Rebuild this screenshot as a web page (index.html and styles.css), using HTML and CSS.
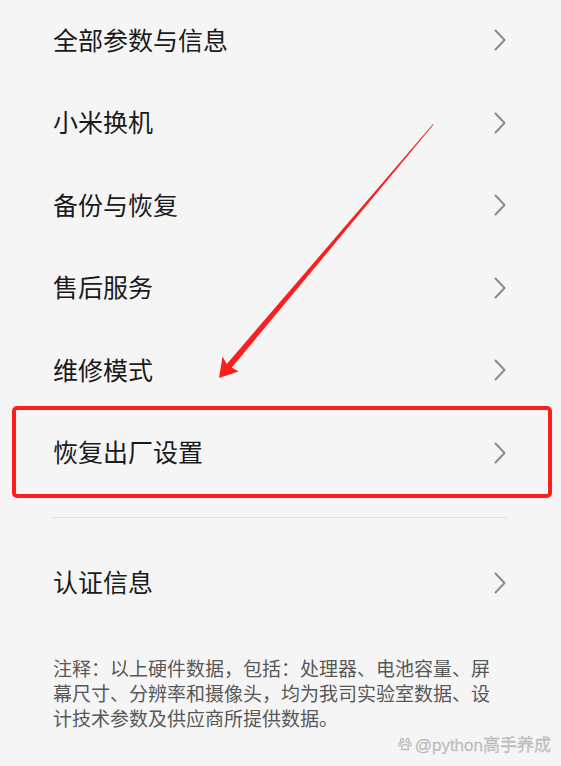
FILE: index.html
```html
<!DOCTYPE html>
<html lang="zh-CN">
<head>
<meta charset="utf-8">
<title>设置</title>
<link rel="stylesheet" href="styles.css">
</head>
<body>
<div class="page">
  <div class="list">
    <div class="row"><span class="label">全部参数与信息</span><svg class="chev" viewBox="0 0 12 22"><polyline points="1.5,1.5 10.5,11 1.5,20.5"/></svg></div>
    <div class="row"><span class="label">小米换机</span><svg class="chev" viewBox="0 0 12 22"><polyline points="1.5,1.5 10.5,11 1.5,20.5"/></svg></div>
    <div class="row"><span class="label">备份与恢复</span><svg class="chev" viewBox="0 0 12 22"><polyline points="1.5,1.5 10.5,11 1.5,20.5"/></svg></div>
    <div class="row"><span class="label">售后服务</span><svg class="chev" viewBox="0 0 12 22"><polyline points="1.5,1.5 10.5,11 1.5,20.5"/></svg></div>
    <div class="row"><span class="label">维修模式</span><svg class="chev" viewBox="0 0 12 22"><polyline points="1.5,1.5 10.5,11 1.5,20.5"/></svg></div>
    <div class="row highlight"><span class="label">恢复出厂设置</span><svg class="chev" viewBox="0 0 12 22"><polyline points="1.5,1.5 10.5,11 1.5,20.5"/></svg></div>
  </div>
  <div class="divider"></div>
  <div class="list">
    <div class="row"><span class="label">认证信息</span><svg class="chev" viewBox="0 0 12 22"><polyline points="1.5,1.5 10.5,11 1.5,20.5"/></svg></div>
  </div>
  <p class="note">注释：以上硬件数据，包括：处理器、电池容量、屏幕尺寸、分辨率和摄像头，均为我司实验室数据、设计技术参数及供应商所提供数据。</p>

  <svg class="arrow" viewBox="0 0 561 766" width="561" height="766">
    <polygon points="433.6,124.6 231.8,367.6 238.5,371.5 219,378 222.5,356.5 226.8,364 432.8,124.2"/>
  </svg>

  <div class="watermark">
    <svg class="paw" viewBox="0 0 14 14"><g fill="none" stroke="#bdbdbd" stroke-width="1.3"><ellipse cx="4" cy="3.5" rx="1.6" ry="2"/><ellipse cx="9.5" cy="3.5" rx="1.6" ry="2"/><ellipse cx="1.8" cy="7.5" rx="1.3" ry="1.7"/><ellipse cx="12" cy="7.5" rx="1.3" ry="1.7"/><path d="M3.5 12.5 C3.5 9 5.5 7.5 7 7.5 C8.5 7.5 10.5 9 10.5 12.5 Z"/></g></svg>
    <span>@python高手养成</span>
  </div>
</div>
</body>
</html>
```
FILE: styles.css
```css
html, body {
  margin: 0;
  padding: 0;
}
body {
  background: #f5f5f5;
  font-family: "Noto Sans CJK SC", "Noto Sans", sans-serif;
}
.page {
  position: relative;
  width: 561px;
  height: 766px;
  overflow: hidden;
}
.list:first-child {
  margin-top: -1.3px;
}
.row {
  position: relative;
  height: 82.6px;
  display: flex;
  align-items: center;
  justify-content: space-between;
  padding: 0 55px 0 53px;
}
.label {
  font-size: 25px;
  color: #1a1a1a;
  padding-bottom: 3px;
}
.chev {
  width: 12px;
  height: 22px;
}
.chev polyline {
  fill: none;
  stroke: #8c8c8c;
  stroke-width: 2;
  stroke-linecap: round;
  stroke-linejoin: round;
}
.highlight::after {
  content: "";
  position: absolute;
  left: 12px;
  right: 9px;
  top: -5.7px;
  bottom: -4px;
  border: 4px solid #fb1f1f;
  border-radius: 5px;
}
.divider {
  height: 1px;
  background: #e0e0e0;
  margin: 23px 54px 23.2px 51px;
}
.note {
  margin: 31px 0 0;
  padding: 0 53px;
  font-size: 19px;
  line-height: 25px;
  color: #585858;
}
.arrow {
  position: absolute;
  left: 0;
  top: 0;
}
.arrow polygon {
  fill: #fb1f1f;
}
.watermark {
  position: absolute;
  right: 10px;
  bottom: 10px;
  display: flex;
  align-items: center;
  gap: 3px;
  font-family: "Liberation Sans", "Noto Sans CJK SC", sans-serif;
  font-size: 17px;
  color: #c4c4c4;
  text-shadow: 0 0 1px #fff, 0 0 2px #fff;
  -webkit-text-stroke: 0.3px #b0b0b0;
}
.paw {
  width: 14px;
  height: 14px;
}
```
